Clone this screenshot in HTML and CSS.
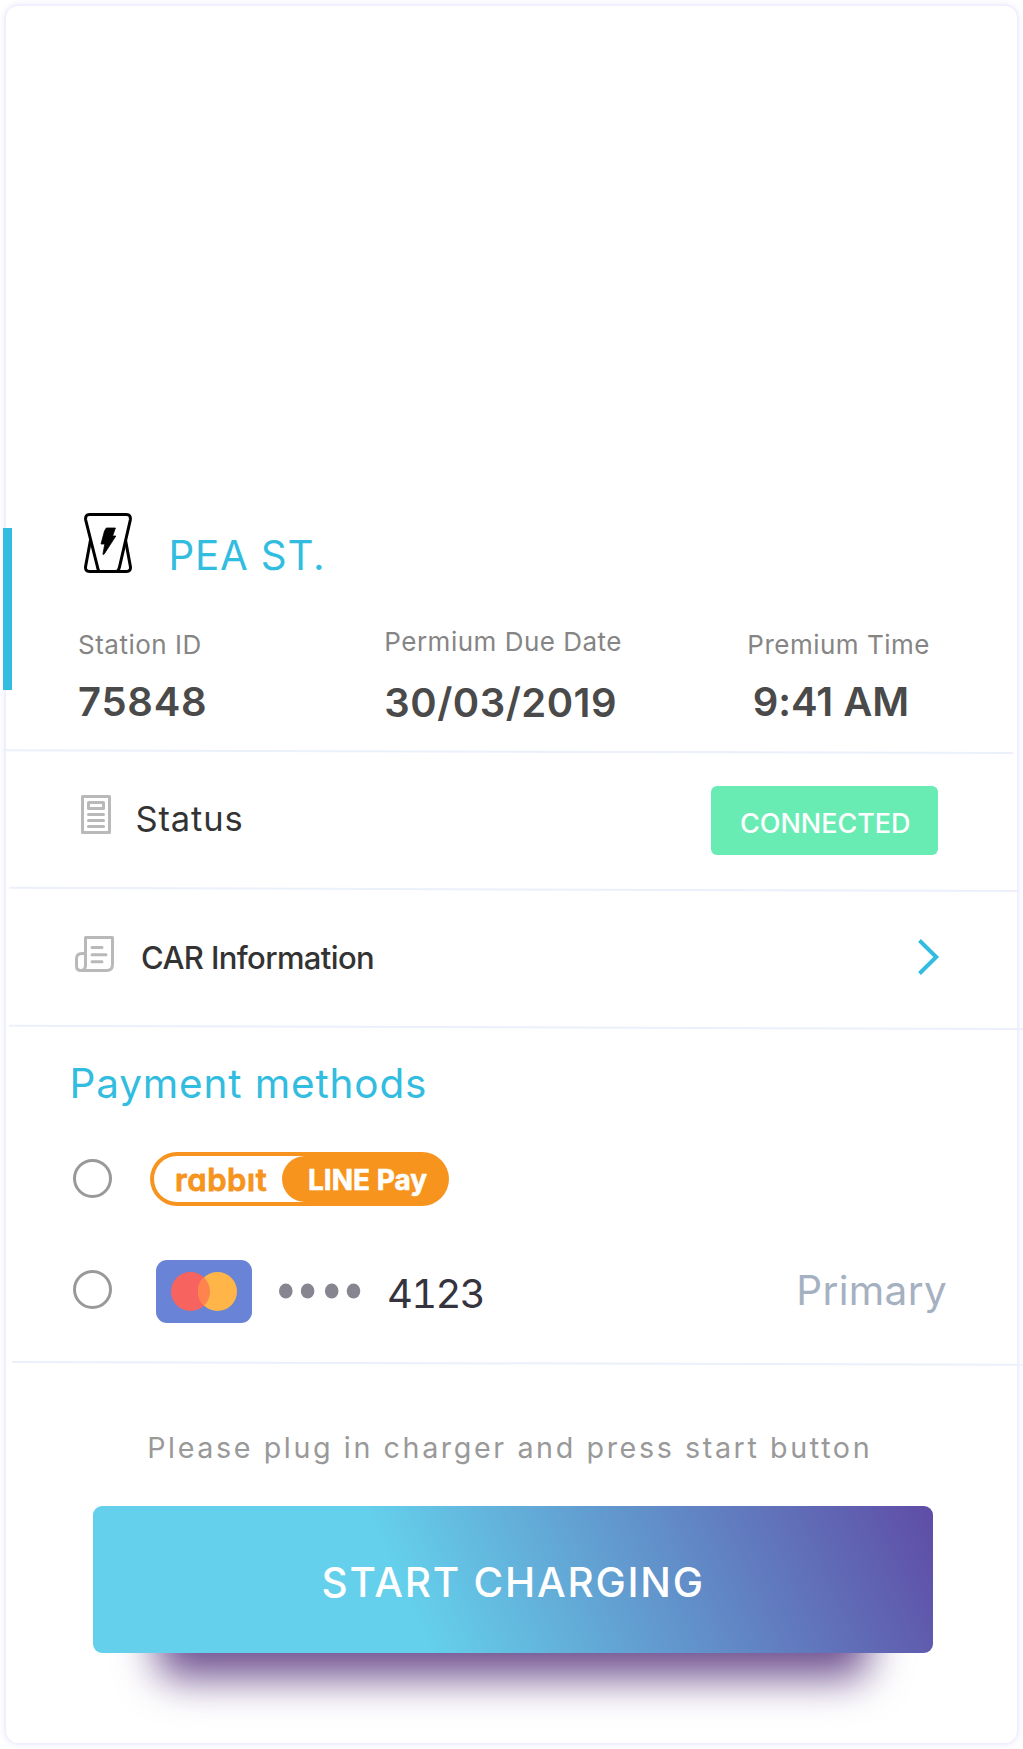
FILE: index.html
```
<!DOCTYPE html>
<html lang="en">
<head>
<meta charset="utf-8">
<title>Start charging</title>
<link rel="stylesheet" href="styles.css">
</head>
<body>
<main class="card">
  <section class="station">
    <span class="station-accent"></span>
    <header class="station-head">
      <svg class="station-icon" width="48" height="60" viewBox="0 0 48 60" fill="none" stroke="#000" stroke-width="3">
        <path d="M14.8 58 C14 57 13.800 55.500 13.500 54 L1.700 7 Q1 1.500 5.500 1.500 H42.500 Q47 1.500 46.300 7 L35.500 54 C35 56 34.500 57.500 33 58"/>
        <path d="M6.500 27 L1.600 53.500 Q1 58.500 5.500 58.500 H42.500 Q47 58.500 46.400 53.500 L41.500 27"/>
        <path d="M22.300 15 H31.400 L28.600 23 H31.800 L20 41.300 H18.900 L20.800 31 H17 L20.500 18 Z" fill="#000" stroke-width="0.8" stroke-linejoin="round"/>
      </svg>
      <h1 class="station-name">PEA ST.</h1>
    </header>
    <dl class="facts">
      <div class="fact">
        <dt>Station ID</dt>
        <dd class="station-id">75848</dd>
      </div>
      <div class="fact fact-date">
        <dt>Permium Due Date</dt>
        <dd>30/03/2019</dd>
      </div>
      <div class="fact fact-time">
        <dt>Premium Time</dt>
        <dd>9:41 AM</dd>
      </div>
    </dl>
  </section>

  <svg class="rule rule-station" width="1010" height="6"><line x1="0" y1="2.300" x2="1010" y2="5"/></svg>

  <section class="row">
    <svg class="status-icon" width="30" height="39" viewBox="0 0 30 39" fill="none" stroke="#b9b9b9" stroke-width="3" stroke-linecap="round" stroke-linejoin="round">
      <path d="M1.500 1.500 H28.500 V37.500 H1.500 Z M7.500 7.500 H22.500 V13.500 H7.500 Z M7.500 19.400 H22.500 M7.500 25.400 H22.500 M7.500 31.400 H22.500"/>
    </svg>
    <span class="status-label">Status</span>
    <span class="badge">CONNECTED</span>
  </section>

  <svg class="rule rule-status" width="1008" height="6"><line x1="0" y1="1.800" x2="1008" y2="5"/></svg>

  <section class="row">
    <svg class="car-icon" width="39" height="36" viewBox="0 0 39 36" fill="none" stroke="#b9b9b9" stroke-width="3" stroke-linecap="round" stroke-linejoin="round">
      <path d="M10.500 30 V1.500 H37.500 V28.500 Q37.500 34.500 31.500 34.500 H6 Q1.500 34.500 1.500 30 V23 Q1.500 17.500 7 17.500 H10 M10.500 29 Q10.500 34.500 6 34.500 M17 11.400 H27 M17 18.700 H31 M17 25.700 H27"/>
    </svg>
    <span class="car-label">CAR Information</span>
    <svg class="chevron" width="24" height="38" viewBox="0 0 24 38" fill="none" stroke="#32bde0" stroke-width="4"><path d="M1.500 2.500 L18.200 19 L1.500 35.500"/></svg>
  </section>

  <svg class="rule rule-car" width="1014" height="6"><line x1="0" y1="1.700" x2="1014" y2="5"/></svg>

  <section class="payment">
    <h2 class="payment-title">Payment methods</h2>
    <div class="method method-line">
      <span class="radio"></span>
      <div class="linepay"><span class="rabbit">rabbıt</span><span class="line">LINE Pay</span></div>
    </div>
    <div class="method method-card">
      <span class="radio"></span>
      <svg class="mastercard" width="96" height="63" viewBox="0 0 96 63">
        <rect width="96" height="63" rx="11" fill="#6984d6"/>
        <circle cx="34.500" cy="31.500" r="19.500" fill="#f7645f"/>
        <circle cx="61.500" cy="31.500" r="19.500" fill="#ffb548"/>
        <path d="M48 17.430 A19.500 19.500 0 0 1 48 45.570 A19.500 19.500 0 0 1 48 17.430 Z" fill="#ff834e"/>
      </svg>
      <svg class="dots" width="82" height="16" viewBox="0 0 82 16" fill="#87858f">
        <ellipse cx="6.800" cy="8" rx="6.800" ry="7.500"/><ellipse cx="28.600" cy="8" rx="6.800" ry="7.500"/><ellipse cx="52.700" cy="8" rx="6.800" ry="7.500"/><ellipse cx="74.500" cy="8" rx="6.800" ry="7.500"/>
      </svg>
      <span class="digits">4123</span>
      <span class="primary">Primary</span>
    </div>
  </section>

  <svg class="rule rule-payment" width="1011" height="6"><line x1="0" y1="2" x2="1011" y2="4.800"/></svg>

  <section class="action">
    <p class="hint">Please plug in charger and press start button</p>
    <button class="start" type="button">START CHARGING</button>
  </section>
</main>
</body>
</html>
```
FILE: styles.css
```
* { box-sizing: border-box; }
body {
  margin: 0;
  background: #fff;
  font-family: Inter, "Liberation Sans", sans-serif;
  overflow: hidden;
}
h1, h2, p, dl, dt, dd { margin: 0; font-weight: 400; }
span, h1, h2, p, dt, dd { white-space: nowrap; }
svg { display: block; flex: none; }

.card {
  position: relative;
  width: 1011px;
  height: 1737px;
  margin: 6px;
  border-radius: 12px;
  background: #fff;
  box-shadow: 0 0 6px rgba(90, 90, 240, 0.24);
}

/* Station summary */
.station { height: 742px; padding: 507px 0 0 72px; }
.station-accent {
  position: absolute;
  left: -3px;
  top: 522px;
  width: 9px;
  height: 162px;
  background: #32bde0;
}
.station-head { display: flex; height: 60px; padding-left: 6px; }
.station-name {
  margin-left: 36.500px;
  font-size: 40.300px;
  line-height: 85px;
  letter-spacing: 0.8px;
  color: #32bde0;
}
.facts {
  display: grid;
  grid-template-columns: 306.300px 363px 1fr;
  padding-top: 53px;
}
.fact { padding-top: 3px; }
.fact dt {
  font-size: 26px;
  line-height: 32px;
  letter-spacing: 0.5px;
  color: #858585;
}
.fact dd {
  margin-top: 16.500px;
  font-size: 40px;
  font-weight: 600;
  line-height: 48px;
  letter-spacing: 0.5px;
  color: #4a4a4a;
}
.fact .station-id { letter-spacing: 0.74px; }
.fact-date { padding-top: 0; }
.fact-date dd { margin-top: 20.500px; }
.fact-time dd { margin-left: 5.500px; letter-spacing: -0.05px; }

/* Slightly tilted separators between sections */
.rule { height: 6px; stroke: #ebf0fb; stroke-width: 2; position: relative; }
.rule-station { margin-left: -3px; }
.rule-status, .rule-car { margin-left: 3px; }
.rule-payment { margin-left: 6px; }

/* Rows */
.row { display: flex; align-items: flex-start; height: 132px; padding-right: 79px; color: #333; }
.status-icon { margin: 41px 24.500px 0 75px; }
.status-label { margin-top: 42.500px; font-size: 34.500px; line-height: 44px; letter-spacing: 0.85px; }
.badge {
  width: 226.500px;
  height: 68.500px;
  margin: 32px 0.500px 0 auto;
  padding: 3.500px 0 0 29px;
  border-radius: 6px;
  background: #69ecb4;
  color: #fff;
  font-size: 27px;
  font-weight: 500;
  line-height: 68px;
  letter-spacing: -0.04px;
}
.car-icon { margin: 44px 27px 0 69px; }
.car-label { margin-top: 45.700px; font-size: 31px; font-weight: 500; line-height: 40px; letter-spacing: -0.62px; }
.chevron { margin: 46px -4px 0 auto; }

/* Payment methods */
.payment { height: 330px; padding-top: 29.300px; }
.payment-title {
  margin-left: 63.500px;
  font-size: 40.500px;
  line-height: 50px;
  letter-spacing: 0.84px;
  color: #32bde0;
}
.method { display: flex; align-items: center; padding-left: 67.400px; }
.method-line { height: 54px; margin-top: 42.700px; }
.method-card { height: 63px; margin-top: 54px; padding-right: 70px; }
.radio {
  flex: none;
  width: 39px;
  height: 39px;
  border: 3px solid #999;
  border-radius: 50%;
}
.method-card .radio { margin-bottom: 3px; }
.linepay {
  display: flex;
  width: 299px;
  height: 54px;
  margin-left: 37.600px;
  padding: 4px;
  border-radius: 27px;
  background: #f7941e;
  line-height: 46px;
}
.rabbit {
  width: 154px;
  margin-right: -26px;
  padding: 0.800px 0 0 21px;
  border-radius: 23px 0 0 23px;
  background: #fff;
  color: #f7941e;
  font-size: 31px;
  font-weight: 600;
  font-feature-settings: "cv11";
  letter-spacing: 0.6px;
  -webkit-text-stroke: 0.8px #f7941e;
}
.line {
  flex: 1;
  padding: 1px 0 0 26px;
  border-radius: 23px;
  background: #f7941e;
  color: #fff;
  font-size: 28px;
  font-weight: 700;
  letter-spacing: 0;
  -webkit-text-stroke: 0.6px #fff;
}
.mastercard { margin-left: 43.600px; }
.dots { margin-left: 27px; }
.digits {
  margin-left: 26px;
  padding-top: 4px;
  font-size: 40px;
  font-variant-numeric: tabular-nums;
  letter-spacing: -1.7px;
  color: #35343e;
}
.primary {
  margin: 0 0 2px auto;
  font-size: 40.500px;
  letter-spacing: 0.34px;
  color: #a5b1c1;
}

/* Start */
.action { padding-top: 63.600px; isolation: isolate; }
.hint {
  margin-left: 141.200px;
  font-size: 28.700px;
  line-height: 36px;
  letter-spacing: 2.6px;
  color: #999;
}
.start {
  position: relative;
  display: block;
  width: 840px;
  height: 147px;
  margin: 40.400px 0 0 87px;
  padding: 6px 0 0 228.500px;
  border: 0;
  border-radius: 9px;
  background: linear-gradient(65.5deg, #64d0eb 37.4%, #5f4ca6 100%);
  color: #fff;
  font: 500 40.500px/141px Inter, "Liberation Sans", sans-serif;
  letter-spacing: 1.78px;
  text-align: left;
  white-space: nowrap;
}
/* Glow cast below the button */
.start::after {
  content: "";
  position: absolute;
  z-index: -1;
  inset: 70px 64px -25px;
  border-radius: 20px;
  background: #6f508f;
  filter: blur(21px);
}
```
